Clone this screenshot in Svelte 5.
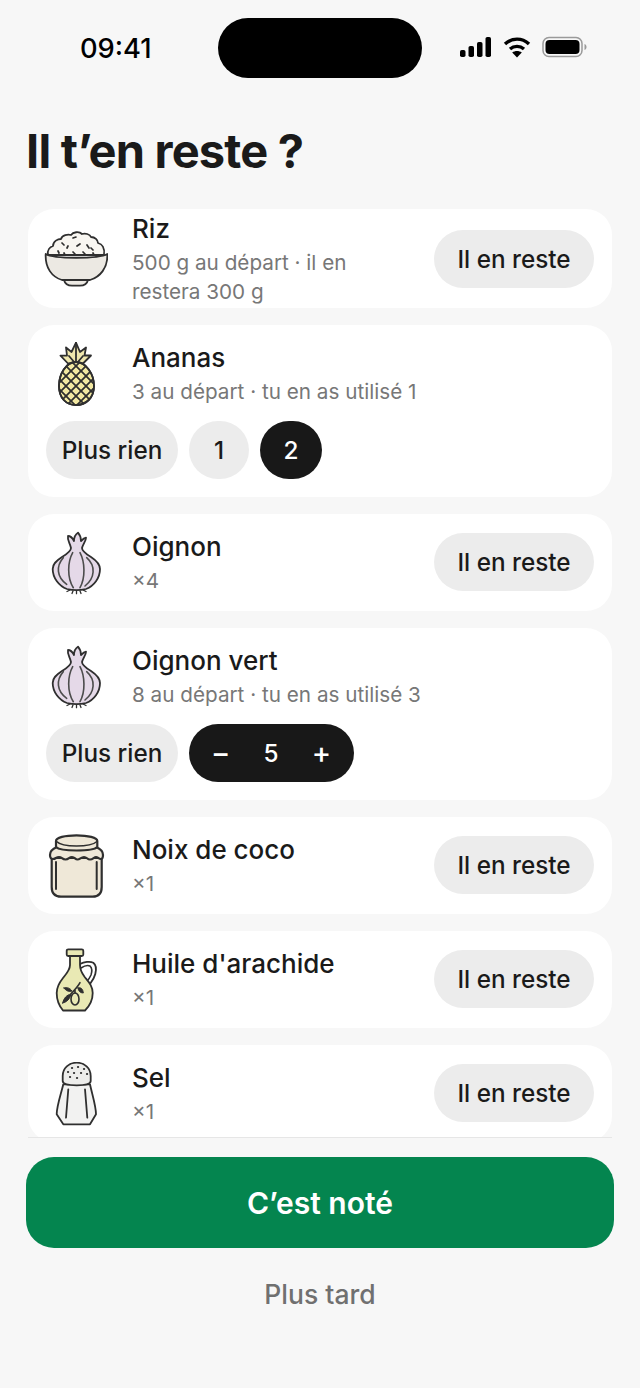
<script>
  const items = [
    { id: 'rice', name: 'Riz', sub: '500 g au départ · il en restera 300 g', tall: true },
    { id: 'pine', name: 'Ananas', sub: '3 au départ · tu en as utilisé 1', choices: ['1', '2'], selected: '2' },
    { id: 'onion', name: 'Oignon', sub: '×4' },
    { id: 'onion', name: 'Oignon vert', sub: '8 au départ · tu en as utilisé 3', stepper: 5 },
    { id: 'jar', name: 'Noix de coco', sub: '×1' },
    { id: 'oil', name: "Huile d'arachide", sub: '×1' },
    { id: 'salt', name: 'Sel', sub: '×1' }
  ];
  const diamonds = [];
  for (let i = -5; i <= 5; i++) diamonds.push(i);
</script>

{#snippet icon(id)}
  <svg class="icon" viewBox="0 0 64 64" fill="none" stroke="#2f2f2f" stroke-width="1.800" stroke-linecap="round" stroke-linejoin="round" aria-hidden="true">
    {#if id === 'rice'}
      <path fill="#f8f6f1" d="M4 29C3 24 6 21 9 20c0-5 5-7 8-7 1-4 7-5 10-4 2-3 8-4 11-1 3-1 8 0 9 3 4 0 7 3 7 6 4 1 7 5 6 12z"/>
      <path fill="#ece9e3" d="M20 54c1 4 4 5.700 8 5.700h8c4 0 7-1.700 8-5.700z"/>
      <path fill="#ece9e3" d="M1.700 28c8 5 53 5 61.600 0 .7 14-7.300 23-17.300 26H18C8 51 1 42 1.700 28z"/>
      <path stroke-width="1.700" d="M18 17l2 2M29 12l3-1M33 20l3-2M43 19l2 3M47 22l2 2M20 27l1 2M29 26l2 2M39 26l2 2M49 27l1 2M14 25l1 2M24 20l-1 2"/>
    {:else if id === 'pine'}
      <path fill="#efe7ad" d="M32 .7l4 9.300 6-4.500-1.500 8 6.500 0-8 8H24l-7.500-7.800 6.500-.2-1-8 5.500 4.500z"/>
      <path d="M32 .7v20M25 14l6 7M39 14l-6 7"/>
      <defs><clipPath id="pine-clip"><path d="M32 20c10 0 18 12 18 24 0 12-8 19-18 19s-17-7-17-19c0-12 7-24 17-24z"/></clipPath></defs>
      <path fill="#f2e8a2" d="M32 20c10 0 18 12 18 24 0 12-8 19-18 19s-17-7-17-19c0-12 7-24 17-24z"/>
      <g clip-path="url(#pine-clip)" stroke-width="1.700">
        {#each diamonds as d}
          <path d={`M${d * 10 + 2} 14L${d * 10 + 62} 74M${d * 10 + 62} 14L${d * 10 + 2} 74`}/>
        {/each}
      </g>
      <path d="M32 20c10 0 18 12 18 24 0 12-8 19-18 19s-17-7-17-19c0-12 7-24 17-24z"/>
    {:else if id === 'onion'}
      <path fill="#e5d9e8" d="M27 17C26 12 23 9 24 5c3 0 5 3 6 5 0-4 2-7 4-8.300C36 4 37 7 37 10c2-2 3-3 5-3.300C42 10 39 13 38 17c0 3 4 6 9 9 6 4 9 7 9 12 0 9-6 17-14 20-6 1.500-13 1.500-19 0C15 55 8.700 47 8.700 38c0-5 3.300-8 9.300-12 5-3 9-6 9-9z"/>
      <path stroke="#4c4c4c" stroke-width="1.600" d="M28.700 21.700C23.500 31 23 47 29.300 56.700M36 21.700C41 31 41.500 47 36 56.700M19.300 26.700C12 35 12.500 46 22.700 53.300M42.700 26.700C52 35 51 47 41 55"/>
      <path stroke-width="1.300" d="M26 59l-3 1.500M29 60l-1 2.500M32.500 60v2.700M36 60l1 2.500M39 59l3 1.500"/>
    {:else if id === 'jar'}
      <path fill="#efe8d8" stroke-width="2.200" d="M7.700 26c0-1 .3-2 .8-2h48.500c.4 0 .7 1 .7 2v27c0 6-3 9.700-9 9.700H17c-6 0-9.300-3.700-9.300-9.700z"/>
      <path fill="#efe8d8" stroke-width="2.200" d="M13 13c-5 2-7 4-7 8 0 2 1 4 3 4 3 0 3-2 6-2 3 0 3 2.500 6.500 2.500S25 23 28 23s3 2.500 5.500 2.500S37 23 40 23s3 2.500 6 2.500 4-2.500 6-2.500 2.500 2 5 2c2 0 2-3 2-4 0-4-2-6-7-8z"/>
      <path fill="#efe8d8" stroke-width="2.200" d="M12 7c0-3.500 9-5.700 20.500-5.700S53.300 3.500 53.300 7v6c-2 2-10 3.500-20.800 3.500S14 15 12 13z"/>
      <path stroke-width="1.600" d="M12.500 7.500c3 3 11 4.500 20 4.500s17-1.500 20.500-4.500"/>
      <path stroke-width="2" d="M12 28v27M52.700 28v27"/>
    {:else if id === 'oil'}
      <path d="M36 16c4-2 10-3 13.300-1.300 3 2.300 3 7.300 2 11.300-1 4-3 7-5.300 10"/>
      <path stroke-width="1.600" d="M37 20c3-2 7-3 9-2 2 2 2 6 1 9-1 2-2 4-3 5"/>
      <path fill="#e9e9b4" d="M26 7v10c0 5-3 8-7 13-4 5-6.300 10-6.300 15 0 7 3 13.500 6.300 17.500h22c4-4 7.700-10 7.700-17.500 0-7-4-11-8-16-3-4-4.700-7-4.700-12V7z"/>
      <rect x="22.700" y="1.300" width="16.600" height="6.700" rx="1.500" fill="#e9e9b4"/>
      <ellipse cx="31" cy="51" rx="4" ry="6" fill="#e9e9b4" stroke-width="1.600"/>
      <path fill="#2f2f2f" stroke-width="1" d="M18.700 55c1-5 4-8 8.300-9-1 5-4 8-8.300 9zM20 40c3-1 6 0 8 3-3 1-6 0-8-3zM34 40c3-1 5 1 5.300 5-3 0-5-2-5.300-5z"/>
      <path stroke-width="1.600" d="M36 34.700c-2 4-5 7-9 11M31 45v-3"/>
    {:else if id === 'salt'}
      <path fill="#f2f2f1" d="M19.300 22.300C17 32 12.700 44 12.700 52.300l6.600 10h26.700l6-10C52 44 48 32 46 22.300z"/>
      <path d="M24.300 27.300L22 55.700M41 27.300l2.300 28.400"/>
      <path fill="#ededeb" d="M18.700 19v-5C18.700 6 25 .7 32.700.7s14 5.300 14 13.300v5c0 3-4 4.300-14 4.300s-14-1.300-14-4.300z"/>
      <path stroke-width="2.200" d="M28 6h.1M34 5h.1M40 7h.1M24 10h.1M30 11h.1M37 11h.1M43 12h.1M33 16h.1M26 15h.1"/>
    {/if}
  </svg>
{/snippet}

<main class="screen">
  <header class="status">
    <span class="time">09:41</span>
    <span class="island"></span>
    <span class="sys">
      <svg width="32" height="20" viewBox="0 0 32 20" fill="#000" aria-hidden="true">
        <rect x="0" y="13" width="5.500" height="7" rx="1.800"/>
        <rect x="8.500" y="9" width="5.500" height="11" rx="1.800"/>
        <rect x="17" y="5" width="5.500" height="15" rx="1.800"/>
        <rect x="25.500" y="0" width="5.500" height="20" rx="1.800"/>
      </svg>
      <svg width="28" height="22" viewBox="0 0 28 22" fill="none" stroke="#000" stroke-width="3.400" aria-hidden="true">
        <path d="M2 8c7-6.500 17-6.500 24 0"/>
        <path d="M7 13c4-3.500 10-3.500 14 0"/>
        <path fill="#000" stroke="none" d="M14 21.500l-4.800-5c2.800-2 6.800-2 9.600 0z"/>
      </svg>
      <svg width="46" height="22" viewBox="0 0 46 22" fill="none" aria-hidden="true">
        <rect x="1" y="1.500" width="39" height="19" rx="6" stroke="#9a9a9a" stroke-width="1.500"/>
        <rect x="3.500" y="4" width="34" height="14" rx="4" fill="#000"/>
        <path d="M42.500 8c1.500.5 2 1.800 2 3s-.5 2.500-2 3z" fill="#9a9a9a"/>
      </svg>
    </span>
  </header>

  <h1>Il t’en reste ?</h1>

  <section class="list">
    {#each items as item}
      <article class="card" class:tall={item.tall} class:open={item.choices || item.stepper}>
        <div class="row">
          {@render icon(item.id)}
          <div class="text">
            <div class="name">{item.name}</div>
            <div class="sub">{item.sub}</div>
          </div>
          {#if !item.choices && !item.stepper}
            <button class="pill side">Il en reste</button>
          {/if}
        </div>
        {#if item.choices}
          <div class="actions">
            <button class="pill none">Plus rien</button>
            {#each item.choices as c}
              <button class="pill num" class:on={c === item.selected}>{c}</button>
            {/each}
          </div>
        {:else if item.stepper}
          <div class="actions">
            <button class="pill none">Plus rien</button>
            <div class="stepper"><span class="sign">−</span><span>{item.stepper}</span><span class="sign">+</span></div>
          </div>
        {/if}
      </article>
    {/each}
  </section>

  <footer>
    <button class="cta">C’est noté</button>
    <button class="later">Plus tard</button>
  </footer>
</main>

<style>
  :global(body) { margin: 0; background: #f7f7f7; }
  * { box-sizing: border-box; }
  .screen {
    width: 640px;
    height: 1388px;
    background: #f7f7f7;
    color: #1a1a1a;
    font-family: Inter, "Liberation Sans", sans-serif;
    overflow: hidden;
  }
  .status {
    height: 78px;
    padding: 18px 52px 0 80px;
    display: flex;
    align-items: center;
  }
  .time { width: 73px; font-size: 27.300px; font-weight: 500; color: #000; }
  .island { width: 204px; height: 60px; margin-left: 65px; border-radius: 30px; background: #000; }
  .sys { display: flex; align-items: center; gap: 11px; margin: -2px 0 0 auto; }
  h1 {
    margin: 45px 0 0 26px;
    height: 56px;
    font-size: 47px;
    line-height: 56px;
    font-weight: 700;
    letter-spacing: -0.8px;
  }
  .list {
    margin: 30px 28px 0;
    height: 928px;
    overflow: hidden;
    display: flex;
    flex-direction: column;
    gap: 17px;
  }
  .card {
    flex: none;
    background: #fff;
    border-radius: 26px;
    padding: 20px 18px 19px;
  }
  .card.tall { height: 99px; }
  .card.open { padding-bottom: 18px; }
  .row { height: 58px; display: flex; align-items: center; }
  .icon { width: 64px; height: 64px; flex: none; margin-left: -2px; }
  .text { flex: 1; min-width: 0; margin-left: 24px; padding-right: 20px; }
  .tall .text { margin-top: 3px; }
  .name { font-size: 26px; line-height: 32px; font-weight: 500; }
  .sub { margin-top: 3px; font-size: 20.700px; line-height: 29px; color: #777; }
  .pill {
    flex: none;
    height: 58px;
    padding: 0;
    border: 0;
    border-radius: 29px;
    background: #ececec;
    color: #1a1a1a;
    font: 500 24.300px Inter, "Liberation Sans", sans-serif;
  }
  .side { width: 160px; margin-bottom: 2px; }
  .tall .side { margin-bottom: 0; margin-top: 2px; }
  .actions { margin-top: 18px; display: flex; gap: 11px; }
  .none { width: 132px; }
  .num { width: 60px; }
  .num.on { width: 62px; background: #181818; color: #fff; }
  .stepper {
    width: 165px;
    height: 58px;
    padding: 0 23px 0 22px;
    border-radius: 29px;
    background: #181818;
    color: #fff;
    font-size: 24.300px;
    font-weight: 500;
    display: flex;
    align-items: center;
    justify-content: space-between;
  }
  .sign { font-size: 29px; font-weight: 500; line-height: 30px; }
  footer {
    margin: 0 26px;
    padding-top: 20px;
    position: relative;
    display: flex;
    flex-direction: column;
    align-items: center;
  }
  footer::before {
    content: "";
    position: absolute;
    top: 0;
    left: 2px;
    right: 2px;
    height: 1px;
    background: #e6e6e6;
  }
  .cta {
    width: 100%;
    height: 91px;
    border: 0;
    border-radius: 28px;
    background: #04854f;
    color: #fff;
    font: 600 30px Inter, "Liberation Sans", sans-serif;
  }
  .later {
    margin-top: 26px;
    height: 40px;
    border: 0;
    background: none;
    color: #707070;
    font: 500 26.500px Inter, "Liberation Sans", sans-serif;
  }
</style>
